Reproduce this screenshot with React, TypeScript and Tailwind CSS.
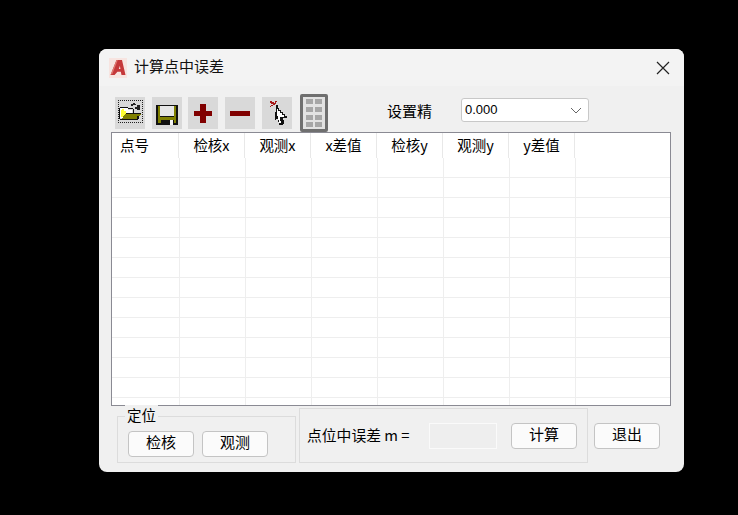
const font = "font-['Noto_Sans_CJK_SC','Liberation_Sans',sans-serif]";

const columns = ["点号", "检核x", "观测x", "x差值", "检核y", "观测y", "y差值"];

function ToolButton({ children, className = "" }: { children: React.ReactNode; className?: string }) {
  return (
    <div className={`flex h-8 w-[30px] shrink-0 items-center justify-center bg-[#d9d9d9] ${className}`}>
      {children}
    </div>
  );
}

function OpenIcon() {
  const dotsX = Array.from({ length: 13 }, (_, i) => 3 + i * 2);
  const dotsY = Array.from({ length: 12 }, (_, i) => 3 + i * 2);
  return (
    <svg width="30" height="32" viewBox="0 0 30 32" shapeRendering="crispEdges">
      {dotsX.map((x) => (
        <g key={x}>
          <rect x={x} y="3" width="1" height="1" fill="#222" />
          <rect x={x} y="25" width="1" height="1" fill="#222" />
        </g>
      ))}
      {dotsY.map((y) => (
        <g key={y}>
          <rect x="3" y={y} width="1" height="1" fill="#222" />
          <rect x="27" y={y} width="1" height="1" fill="#222" />
        </g>
      ))}
      <path d="M5 11h8v2h4v3H11l-3 5H5z" fill="#fff" />
      <path d="M6 13h1v-1h2v2h2v2h2v1h-3v2H8v1H6z" fill="#ffff33" />
      <path d="M10 17h16l-4 5H7z" fill="#808000" />
      <path d="M5 10h8v1H5zM13 11h5v1h-5zM4 11h1v11H4zM5 22h18v1H5zM11 16h15v1H11zM22 19h2v3h-2zM18 12h1v4h-1z" fill="#111" />
      <path d="M16 7h2V6h2v1h1v1h-3v1h-2zM22 8h3v5h-3zM20 10h2v2h-2z" fill="#222" />
    </svg>
  );
}

function SaveIcon() {
  return (
    <svg width="30" height="32" viewBox="0 0 30 32" shapeRendering="crispEdges">
      <path d="M4 8h22v20H4z" fill="#111" />
      <path d="M6 9h18v17H6z" fill="#808000" />
      <path d="M8 9h14v10H8z" fill="#e6e6e6" />
      <path d="M8 19h14v1H8z" fill="#111" />
      <path d="M9 23h13v5H9z" fill="#111" />
      <path d="M18 23h3v5h-3z" fill="#f5f5f5" />
    </svg>
  );
}

function PointerIcon() {
  return (
    <svg width="30" height="32" viewBox="0 0 30 32" shapeRendering="crispEdges">
      <path d="M8 4h2v1h2v1h1V4h2v1h-1v2h-1v1h-2v1H9v1H8V9h1V8h2V7H9V6H8z" fill="#a81818" />
      <path d="M14 8h2v3h1v2h2v2h2v2h2v2h2v2h-4v2h1v4h-1v1h-4v-3h-1v-3h-2v1h-1z" fill="#111" />
      <path d="M15 12h1v2h2v2h2v2h2v2h-4v4h1v2h-2v-3h-1v-4h-1z" fill="#fff" />
    </svg>
  );
}

function GridIcon() {
  const rows = [1, 9, 17, 24];
  return (
    <svg width="20" height="30" viewBox="0 0 20 30" shapeRendering="crispEdges">
      {rows.map((y) =>
        [2, 11].map((x) => <rect key={`${x}-${y}`} x={x} y={y} width="7" height="5" fill="#a6a6a6" />)
      )}
    </svg>
  );
}

function AcadLogo() {
  return (
    <div className="flex h-5 w-[18px] items-center justify-center bg-[#f7e4e0]">
      <svg width="16" height="17" viewBox="0 0 16 17">
        <path d="M6.5 1h5.5L15.5 16H11.5l-.7-3.2H7.4L4.6 16H.5z" fill="#c5383a" />
        <path d="M8.8 10h1.6l-.5-3.2z" fill="#f7e4e0" />
        <path d="M6.5 1h1.3L2.5 14.5.5 16z" fill="#df7a72" />
      </svg>
    </div>
  );
}

function PushButton({ label }: { label: string }) {
  return (
    <div className="flex h-[26px] w-[66px] shrink-0 items-center justify-center rounded-[4px] border border-[#c4c4c4] bg-[#fbfbfb] pb-[3px] text-[15px] text-black">
      {label}
    </div>
  );
}

export default function App() {
  return (
    <div className={`h-[515px] w-[738px] overflow-hidden bg-black pl-[99px] pt-[49px] ${font}`}>
      <div className="flex h-[423px] w-[585px] flex-col overflow-hidden rounded-[8px] bg-[#f0f0f0] text-black">
        <div className="flex h-[37px] shrink-0 items-center bg-[#f3f3f3] pl-[10px] pr-[14px]">
          <AcadLogo />
          <span className="ml-[7px] pb-[2px] text-[15px] text-[#111]">计算点中误差</span>
          <svg className="ml-auto" width="14" height="14" viewBox="0 0 14 14">
            <path d="M1 1l12 12M13 1L1 13" stroke="#222" strokeWidth="1.2" fill="none" />
          </svg>
        </div>

        <div className="flex h-[46px] shrink-0 items-start pl-4">
          <div className="mt-[8px] flex items-center">
            <ToolButton><OpenIcon /></ToolButton>
            <ToolButton className="ml-[7px]"><SaveIcon /></ToolButton>
            <ToolButton className="ml-[6px]">
              <svg className="mr-[1px]" width="18" height="19" viewBox="0 0 18 19" shapeRendering="crispEdges">
                <path d="M6 0h6v7h6v5h-6v7H6v-7H0V7h6z" fill="#800000" />
              </svg>
            </ToolButton>
            <ToolButton className="ml-[7px]">
              <svg width="20" height="5" viewBox="0 0 20 5" shapeRendering="crispEdges">
                <path d="M0 0h20v5H0z" fill="#800000" />
              </svg>
            </ToolButton>
            <ToolButton className="ml-[7px]"><PointerIcon /></ToolButton>
            <div className="ml-2 flex h-[38px] w-[28px] items-center justify-center rounded-[2px] border-[3px] border-[#6f6f6f] bg-[#e2e2e2]">
              <GridIcon />
            </div>
          </div>
          <span className="ml-[59px] mt-[14px] text-[15px] leading-[22px]">设置精</span>
          <div className="ml-[29px] mt-[12px] flex h-6 w-32 items-center justify-between rounded-[3px] border border-[#c8c8c8] bg-white pl-[3px] pr-[6px] text-[13px] font-['Liberation_Sans']">
            0.000
            <svg width="12" height="7" viewBox="0 0 12 7">
              <path d="M1 1l5 5 5-5" stroke="#666" strokeWidth="1" fill="none" />
            </svg>
          </div>
        </div>

        <div className="ml-3 h-[274px] w-[560px] shrink-0 overflow-hidden border border-[#8a8a93] bg-white">
          <div className="flex h-[25px]">
            {columns.map((col, i) => (
              <div
                key={col}
                className={`flex h-[25px] shrink-0 items-center border-r border-[#e8e8e8] pb-[2px] text-[14.5px] ${
                  i === 0 ? "w-[67px] pl-2" : "w-[66px] justify-center"
                }`}
              >
                {col}
              </div>
            ))}
          </div>
          {Array.from({ length: 13 }).map((_, row) => (
            <div key={row} className="flex h-5 border-b border-[#eeeeee]">
              {columns.map((col, i) => (
                <div key={col} className={`h-full shrink-0 border-r border-[#eeeeee] ${i === 0 ? "w-[68px]" : "w-[66px]"}`} />
              ))}
            </div>
          ))}
        </div>

        <div className="flex pl-[18px] pt-[2px]">
          <div className="relative mt-2 flex h-[47px] w-[179px] shrink-0 items-end gap-2 border border-[#dcdcdc] px-[10px] pb-[5px]">
            <span className="absolute -top-[12px] left-[7px] bg-[#f0f0f0] px-[2px] text-[14.5px] leading-5">定位</span>
            <PushButton label="检核" />
            <PushButton label="观测" />
          </div>
          <div className="ml-[3px] flex h-[55px] w-[289px] shrink-0 items-start border border-[#dcdcdc] pl-[7px] pt-[14px]">
            <span className="w-[122px] shrink-0 text-[14.8px] leading-6">点位中误差 m =</span>
            <div className="h-[26px] w-[68px] shrink-0 border border-[#fafafa] bg-[#eeeeee]" />
            <div className="ml-[14px]"><PushButton label="计算" /></div>
          </div>
          <div className="ml-[6px] pt-[15px]"><PushButton label="退出" /></div>
        </div>
      </div>
    </div>
  );
}
